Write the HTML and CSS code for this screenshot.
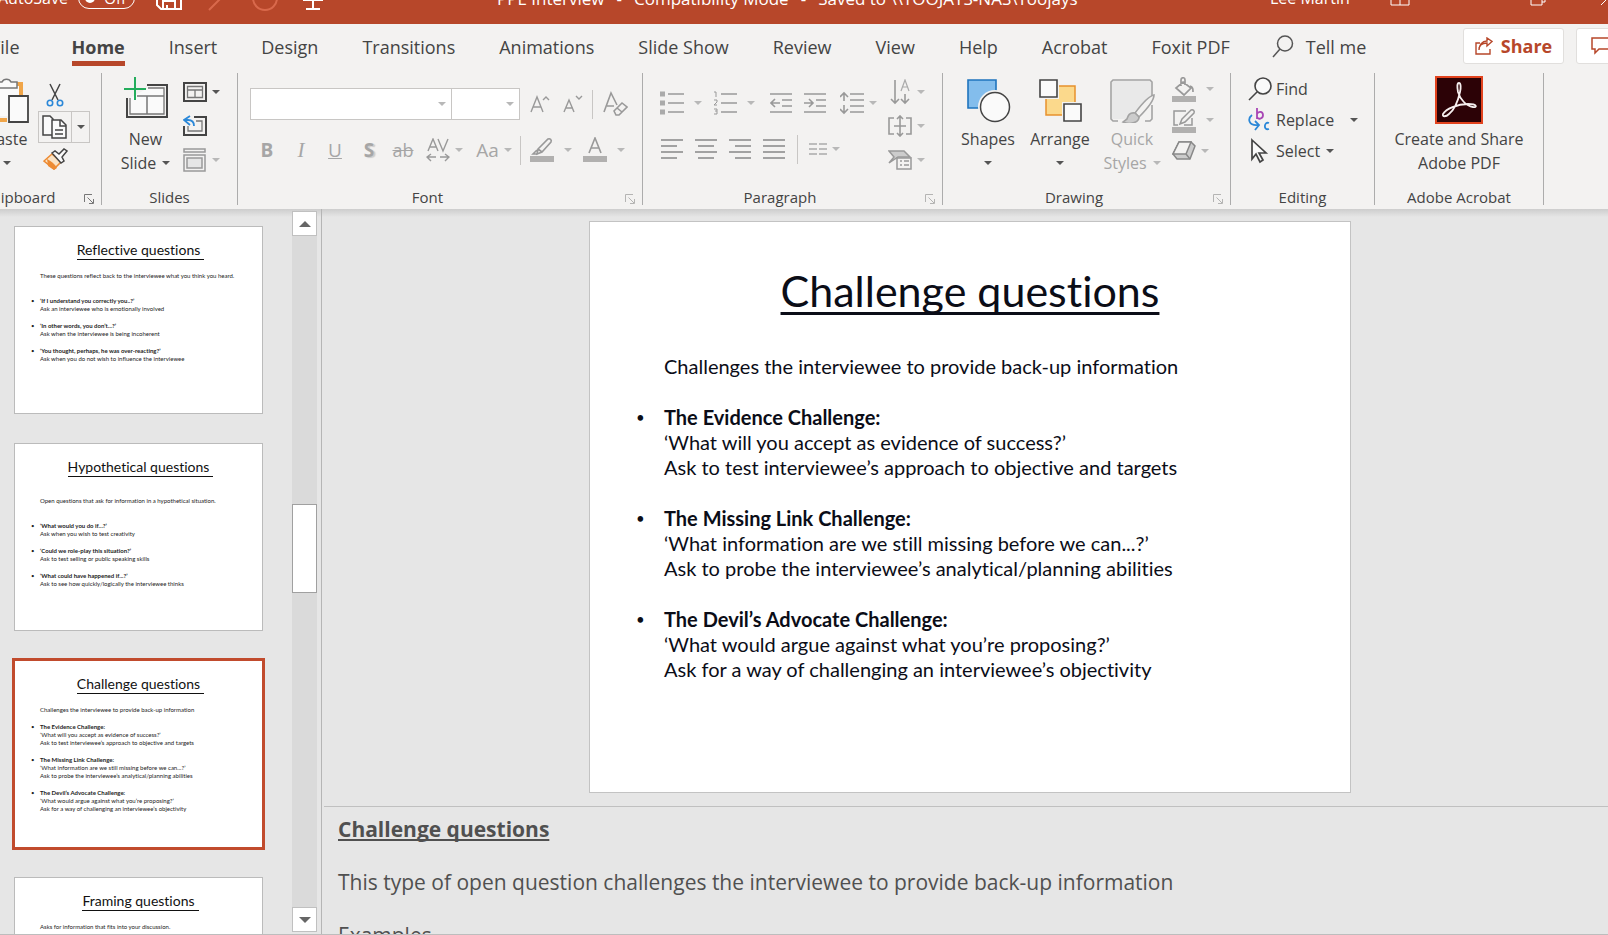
FILE: index.html
```html
<!DOCTYPE html>
<html lang="en">

<head>
    <meta charset="utf-8">
    <title>PPE Interview - PowerPoint</title>
    <link rel="stylesheet" href="styles.css">
</head>

<body>
    <header class="titlebar">
        <div class="titlebar-row">
            <div class="quick-access">
                <span class="autosave">AutoSave</span>
                <button class="toggle" aria-label="AutoSave off"><span class="knob"></span>Off</button>
                <svg class="qa-icon" width="26" height="28" viewBox="0 0 26 28" fill="none" stroke="#fff" stroke-width="2"><path d="M1 3h24v22H5l-4-4zM7 25v-8h12v8M11 25v-4"/></svg>
                <svg class="qa-icon" width="26" height="28" viewBox="0 0 26 28" fill="none" stroke="#d9694c" stroke-width="2"><path d="M5 26L19 12a7 7 0 0 0-10-10"/></svg>
                <svg class="qa-icon" width="26" height="28" viewBox="0 0 26 28" fill="none" stroke="#d9694c" stroke-width="2"><circle cx="13" cy="14" r="12"/></svg>
                <svg class="qa-icon" width="26" height="28" viewBox="0 0 26 28" fill="none" stroke="#fff" stroke-width="2"><path d="M2 2h22M4 2v14h18V2M13 16v9M6 25h14"/></svg>
                <span class="caret caret-light"></span>
            </div>
            <div class="doc-title">
                <span>PPE Interview</span><span>-</span><span>Compatibility Mode</span><span>-</span><span>Saved to \\TOOJAYS-NAS\Toojays</span>
            </div>
            <div class="window-tools">
                <span>Lee Martin</span>
                <svg width="20" height="16" viewBox="0 0 20 16" fill="none" stroke="#fff"><path d="M1 1h18v14H1zM1 5h18M10 9v6"/></svg>
                <svg width="16" height="16" viewBox="0 0 16 16" fill="none" stroke="#fff"><path d="M1 4h11v11H1zM4 4V1h11v11h-3"/></svg>
                <svg width="16" height="16" viewBox="0 0 16 16" fill="none" stroke="#fff"><path d="M1 15L15 1M1 1l14 14"/></svg>
            </div>
        </div>
    </header>

    <nav class="tabs">
        <a href="#" class="tab-file">File</a>
        <a href="#" class="active"><span>Home</span></a>
        <a href="#">Insert</a>
        <a href="#">Design</a>
        <a href="#">Transitions</a>
        <a href="#">Animations</a>
        <a href="#">Slide Show</a>
        <a href="#">Review</a>
        <a href="#">View</a>
        <a href="#">Help</a>
        <a href="#">Acrobat</a>
        <a href="#">Foxit PDF</a>
        <button class="tell-me">
            <svg width="22" height="24" viewBox="0 0 22 24" fill="none" stroke="#555" stroke-width="1.5"><circle cx="13" cy="8.500" r="7.500"/><path d="M8 14L1 22"/></svg>
            Tell me
        </button>
        <div class="tab-actions">
            <button class="share">
                <svg width="18" height="18" viewBox="0 0 18 18" fill="none" stroke="#b7472a" stroke-width="1.400"><path d="M5 6H1v11h14v-5M4 13c0-5 3-7 8-7V9l5-4.500L12 1v3C7 4 4 8 4 13z"/></svg>
                Share
            </button>
            <button class="comments" aria-label="Comments">
                <svg width="20" height="18" viewBox="0 0 20 18" fill="none" stroke="#b7472a" stroke-width="1.500"><path d="M1 1h18v11H8l-4 4v-4H1z"/></svg>
            </button>
        </div>
    </nav>

    <section class="ribbon">
        <div class="group clipboard">
            <div class="group-body">
                <button class="big paste">
                    <svg width="46" height="46" viewBox="0 0 46 46" fill="none"><path d="M9 7H3v36h20M31 7h6v12" stroke="#f0a548" stroke-width="4"/><path d="M5 9h30v30H5z" fill="#fafafa"/><path d="M12 11V5h6a5 5 0 0 1 9 0h6v6z" fill="#fafafa" stroke="#777" stroke-width="1.500"/><path d="M25 19h19v26H25z" fill="#fafafa" stroke="#444" stroke-width="1.800"/></svg>
                    <span>Paste</span>
                    <span class="second"><span class="caret"></span></span>
                </button>
                <div class="stack">
                    <button class="tool" aria-label="Cut">
                        <svg width="18" height="24" viewBox="0 0 18 24" fill="none"><path d="M4 1l8 16M14 1L6 17" stroke="#444" stroke-width="1.500"/><circle cx="4" cy="20" r="2.700" stroke="#2b88d8" stroke-width="1.600"/><circle cx="14" cy="20" r="2.700" stroke="#2b88d8" stroke-width="1.600"/></svg>
                    </button>
                    <div class="copy-split">
                        <button aria-label="Copy">
                            <svg width="26" height="26" viewBox="0 0 26 26" fill="#fafafa" stroke="#444" stroke-width="1.500"><path d="M9 21H1V2h7l3 3v16z"/><path d="M10 6h9l5 5v13H10z"/><path d="M18 6v6h6M13 16h8M13 20h8" fill="none"/></svg>
                        </button>
                        <button aria-label="Copy options"><span class="caret"></span></button>
                    </div>
                    <button class="tool" aria-label="Format Painter">
                        <svg width="25" height="24" viewBox="0 0 25 24" fill="none"><path d="M9 7l9 8-7 7-10-8z" fill="#fbe3c4" stroke="#ed8b33" stroke-width="1.500"/><path d="M4 12c4 2 8 5 10 9l-3 2-6-4z" fill="#ed8b33"/><path d="M9 6l3-2 4 3 5-5 3 2-5 6 2 4-3 2z" fill="#fafafa" stroke="#444" stroke-width="1.500"/></svg>
                    </button>
                </div>
            </div>
            <div class="group-label"><span>Clipboard</span><button class="launcher" aria-label="Clipboard settings"><svg width="10" height="10" viewBox="0 0 10 10" fill="none" stroke="#777"><path d="M.5 8V.5H8M3.500 3.500L9 9M9.500 5v4.500H5"/></svg></button></div>
        </div>

        <div class="group slides">
            <div class="group-body">
                <button class="big new-slide">
                    <svg width="46" height="46" viewBox="0 0 46 46" fill="none"><path d="M24 8h20v32H4V21" stroke="#444" stroke-width="2"/><path d="M25 11h16v26H7V21" fill="#fafafa" stroke="#777" stroke-width="1.300"/><path d="M14 19h27M24 19v18" stroke="#777" stroke-width="1.500"/><path d="M12 0v23M1 12h22" stroke="#23ad5c" stroke-width="2"/></svg>
                    <span>New</span>
                    <span class="second">Slide <span class="caret"></span></span>
                </button>
                <div class="stack side-tools">
                    <button aria-label="Layout"><svg width="24" height="20" viewBox="0 0 24 20" fill="none"><path d="M1 1h22v18H1z" stroke="#444" stroke-width="2"/><path d="M4.500 4.500h15v11h-15zM4.500 8h15M12 8v8" stroke="#777" stroke-width="1.300"/></svg><span class="caret"></span></button>
                    <button aria-label="Reset"><svg width="24" height="22" viewBox="0 0 24 22" fill="none"><path d="M11 2h12v18H1v-9" stroke="#444" stroke-width="2"/><path d="M13 6h6v10H5v-5" stroke="#777" stroke-width="1.300"/><path d="M7 1L1 5l6 5M1 5h4c4 0 6 2 6 6" stroke="#2b88d8" stroke-width="1.800"/></svg></button>
                    <button disabled aria-label="Section"><svg width="24" height="24" viewBox="0 0 24 24" fill="none" stroke="#999" stroke-width="1.500"><path d="M1 1h21v3H1zM1 7h21v16H1z"/><path d="M4 10h15v10H4z" fill="#e6e6e6"/></svg><span class="caret"></span></button>
                </div>
            </div>
            <div class="group-label"><span>Slides</span></div>
        </div>

        <div class="group font">
            <div class="group-body rows">
                <div class="row font-top">
                    <div class="combo"><input type="text" aria-label="Font name"><span class="caret"></span></div>
                    <div class="combo"><input type="text" aria-label="Font size"><span class="caret"></span></div>
                    <button disabled aria-label="Increase font size"><svg width="20" height="20" viewBox="0 0 20 20" fill="none" stroke="#999" stroke-width="1.400"><path d="M1 18L7 3l6 15M3 13h8M13 6l3-3 3 3"/></svg></button>
                    <button disabled aria-label="Decrease font size"><svg width="20" height="20" viewBox="0 0 20 20" fill="none" stroke="#999" stroke-width="1.400"><path d="M1 18L6 6l5 12M3 14h7M13 2l3 3 3-3"/></svg></button>
                    <i class="sep"></i>
                    <button disabled aria-label="Clear formatting"><svg width="25" height="26" viewBox="0 0 25 26" fill="none" stroke="#999" stroke-width="1.600"><path d="M1 21L8 2l6 12M4 15h7"/><path d="M11 20l8-8 5 4-8 8h-3zM14 17l5 4"/></svg></button>
                </div>
                <div class="row font-bottom">
                    <button disabled class="letter"><b>B</b></button>
                    <button disabled class="letter"><i class="serif">I</i></button>
                    <button disabled class="letter"><u>U</u></button>
                    <button disabled class="letter shadow"><b>S</b></button>
                    <button disabled class="letter strike"><s>ab</s></button>
                    <button disabled class="letter" aria-label="Character spacing"><svg width="24" height="24" viewBox="0 0 24 24" fill="none" stroke="#999" stroke-width="1.400"><path d="M2 13L7 1l5 12M4 9h6M12 1l5 12L22 1M1 19h9M14 19h9M5 16l-4 3 4 4M19 16l4 3-4 4"/></svg><span class="caret"></span></button>
                    <button disabled class="letter case">Aa<span class="caret"></span></button>
                    <i class="sep"></i>
                    <button disabled aria-label="Highlight"><svg width="24" height="26" viewBox="0 0 24 26" fill="none" stroke="#999" stroke-width="1.600"><path d="M8 12L18 2c2-1 4 1 3 3L12 15l-5 2zM8 12l4 3M7 13l-4 4h5"/><path d="M0 19h24v6H0z" fill="#b1b0af" stroke="none"/></svg><span class="caret wide"></span></button>
                    <button disabled aria-label="Font colour"><svg width="24" height="26" viewBox="0 0 24 26" fill="none" stroke="#999" stroke-width="1.600"><path d="M6 16l6-15 6 15M8 11h8"/><path d="M0 19h24v6H0z" fill="#b1b0af" stroke="none"/></svg><span class="caret wide"></span></button>
                </div>
            </div>
            <div class="group-label"><span>Font</span><button class="launcher off" aria-label="Font settings"><svg width="10" height="10" viewBox="0 0 10 10" fill="none" stroke="#777"><path d="M.5 8V.5H8M3.500 3.500L9 9M9.500 5v4.500H5"/></svg></button></div>
        </div>

        <div class="group paragraph">
            <div class="group-body">
                <div class="rows">
                    <div class="row para-top">
                        <button disabled aria-label="Bullets"><svg width="24" height="24" viewBox="0 0 24 24" stroke="#999" stroke-width="1.600"><path d="M8 3h16M8 12h16M8 21h16"/><path d="M0 3h5M0 12h5M0 21h5" stroke="#aaa" stroke-width="5"/></svg><span class="caret wide"></span></button>
                        <button disabled aria-label="Numbering"><svg width="24" height="24" viewBox="0 0 24 24" fill="none" stroke="#999" stroke-width="1.600"><path d="M8 3h16M8 12h16M8 21h16"/><path d="M1 1h2v5M1 9h3v2l-3 3h3M1 18h3v5H1M2 20h2" stroke-width="1"/></svg><span class="caret wide"></span></button>
                        <button disabled aria-label="Decrease indent"><svg width="22" height="24" viewBox="0 0 22 24" fill="none" stroke="#999" stroke-width="1.600"><path d="M0 3h22M12 9h10M12 15h10M0 21h22M10 12H1M5 8l-4 4 4 4"/></svg></button>
                        <button disabled aria-label="Increase indent"><svg width="22" height="24" viewBox="0 0 22 24" fill="none" stroke="#999" stroke-width="1.600"><path d="M0 3h22M12 9h10M12 15h10M0 21h22M0 12h9M5 8l4 4-4 4"/></svg></button>
                        <button disabled aria-label="Line spacing"><svg width="24" height="24" viewBox="0 0 24 24" fill="none" stroke="#999" stroke-width="1.600"><path d="M10 3h14M10 9h14M10 15h14M10 21h14M4 2v8M4 14v8M0 6l4-4 4 4M0 18l4 4 4-4"/></svg><span class="caret"></span></button>
                    </div>
                    <div class="row para-bottom">
                        <button disabled aria-label="Align left"><svg width="22" height="20" viewBox="0 0 22 20" stroke="#888" stroke-width="1.600"><path d="M0 1h22M0 7h16M0 13h22M0 19h16"/></svg></button>
                        <button disabled aria-label="Centre"><svg width="22" height="20" viewBox="0 0 22 20" stroke="#888" stroke-width="1.600"><path d="M0 1h22M3 7h16M0 13h22M3 19h16"/></svg></button>
                        <button disabled aria-label="Align right"><svg width="22" height="20" viewBox="0 0 22 20" stroke="#888" stroke-width="1.600"><path d="M0 1h22M6 7h16M0 13h22M6 19h16"/></svg></button>
                        <button disabled aria-label="Justify"><svg width="22" height="20" viewBox="0 0 22 20" stroke="#888" stroke-width="1.600"><path d="M0 1h22M0 7h22M0 13h22M0 19h22"/></svg></button>
                        <i class="sep"></i>
                        <button disabled aria-label="Columns"><svg width="18" height="12" viewBox="0 0 18 12" stroke="#aaa" stroke-width="1.500"><path d="M0 1h8M0 6h8M0 11h8M10 1h8M10 6h8M10 11h8"/></svg><span class="caret"></span></button>
                    </div>
                </div>
                <div class="stack side-tools">
                    <button disabled aria-label="Text direction"><svg width="24" height="26" viewBox="0 0 24 26" fill="none" stroke="#999" stroke-width="1.600"><path d="M7 1v23M3 20l4 4 4-4M17 15v9M13 20l4 4 4-4"/><path d="M13 12l4-11 4 11M14 8h6" stroke="#aaa" stroke-width="1.200"/></svg><span class="caret"></span></button>
                    <button disabled aria-label="Align text"><svg width="24" height="22" viewBox="0 0 24 22" fill="none" stroke="#999" stroke-width="1.600"><path d="M6 3H1v16h5M18 3h5v16h-5M12 1v20M9 4l3-3 3 3M9 18l3 3 3-3M6 11h12"/></svg><span class="caret"></span></button>
                    <button disabled aria-label="Convert to SmartArt"><svg width="24" height="20" viewBox="0 0 24 20" fill="none" stroke="#999" stroke-width="1.500"><path d="M1 1h15l6 6H10l-9 6 5-6z" fill="#ccc"/><path d="M9 8h14v11H9z" fill="#f3f2f1"/><path d="M12 11h2M16 11h5M12 15h2M16 15h5"/></svg><span class="caret"></span></button>
                </div>
            </div>
            <div class="group-label"><span>Paragraph</span><button class="launcher off" aria-label="Paragraph settings"><svg width="10" height="10" viewBox="0 0 10 10" fill="none" stroke="#777"><path d="M.5 8V.5H8M3.500 3.500L9 9M9.500 5v4.500H5"/></svg></button></div>
        </div>

        <div class="group drawing">
            <div class="group-body">
                <button class="big">
                    <svg width="46" height="46" viewBox="0 0 46 46"><path d="M3 3h28v28H3z" fill="#83bdec" stroke="#1f74bd" stroke-width="1.600"/><circle cx="30" cy="30" r="17" fill="#f3f2f1"/><circle cx="30" cy="30" r="14.500" fill="#fafafa" stroke="#444" stroke-width="1.500"/></svg>
                    <span>Shapes</span>
                    <span class="second"><span class="caret"></span></span>
                </button>
                <button class="big">
                    <svg width="46" height="46" viewBox="0 0 46 46"><path d="M9 9h29v29H9z" fill="#fbd98c" stroke="#e8912d" stroke-width="1.500"/><path d="M2 2h20v20H2zM25 25h20v20H25z" fill="#f3f2f1"/><path d="M3 3h17v17H3zM27 27h17v17H27z" fill="#fafafa" stroke="#444" stroke-width="1.600"/></svg>
                    <span>Arrange</span>
                    <span class="second"><span class="caret"></span></span>
                </button>
                <button class="big" disabled>
                    <svg width="46" height="46" viewBox="0 0 46 46" fill="none" stroke="#a3a3a3" stroke-width="1.600"><path d="M3 4h39v14L24 36l-7 6H3z" fill="#e9e9e9" stroke="none"/><path d="M9 44H4l-2-2V5l2-2h37l2 2v14M43 28v14l-2 2h-5" /><path d="M45 18c-5 1-13 10-19 18l4 4c7-7 15-16 15-22z" fill="#f3f2f1"/><path d="M26 36c-6-1-7 3-8 6l-4 3c6 3 16 1 16-5z" fill="#ccc"/></svg>
                    <span>Quick</span>
                    <span class="second">Styles <span class="caret"></span></span>
                </button>
                <div class="stack side-tools">
                    <button disabled aria-label="Shape fill"><svg width="24" height="25" viewBox="0 0 24 25" fill="none" stroke="#999" stroke-width="1.700"><path d="M11 5l8 6-7 7-8-7zM9 9V3c0-3 4-3 4 0v5M18 9c3 1 3 3 3 6"/><path d="M0 19h24v6H0z" fill="#b1b0af" stroke="none"/></svg><span class="caret wide"></span></button>
                    <button disabled aria-label="Shape outline"><svg width="24" height="25" viewBox="0 0 24 25" fill="none" stroke="#999" stroke-width="1.500"><path d="M14 3H2v14h4M20 10v7h-8"/><path d="M10 11l9-9c2-1 4 1 3 3l-9 9-5 2z"/><path d="M0 19h24v6H0z" fill="#b1b0af" stroke="none"/></svg><span class="caret wide"></span></button>
                    <button disabled aria-label="Shape effects"><svg width="24" height="20" viewBox="0 0 24 20" stroke="#888" stroke-width="1.500"><path d="M7 1h12l4 4-5 13H5l-4-5z" fill="#ccc"/><path d="M7 1h12l-5 12H1zM14 13l4 5" fill="#f3f2f1"/></svg><span class="caret"></span></button>
                </div>
            </div>
            <div class="group-label"><span>Drawing</span><button class="launcher off" aria-label="Drawing settings"><svg width="10" height="10" viewBox="0 0 10 10" fill="none" stroke="#777"><path d="M.5 8V.5H8M3.500 3.500L9 9M9.500 5v4.500H5"/></svg></button></div>
        </div>

        <div class="group editing">
            <div class="group-body">
                <button><svg width="24" height="24" viewBox="0 0 24 24" fill="none" stroke="#444" stroke-width="1.600"><circle cx="15" cy="9" r="8" fill="#fafafa"/><path d="M9 15l-8 8"/></svg>Find</button>
                <button><svg width="24" height="26" viewBox="0 0 24 26" fill="none" stroke-width="1.800"><path d="M9 1v11M9 7c1-3 6-3 6 1s-5 5-6 2" stroke="#a846b5"/><path d="M4 8c-5 4-3 11 6 10M7 14l4 4-4 5" stroke="#2b88d8"/><path d="M21 16c-5-2-6 8 0 6" stroke="#2b88d8"/></svg>Replace<span class="caret wide"></span></button>
                <button><svg width="24" height="26" viewBox="0 0 24 26" fill="#fafafa" stroke="#444" stroke-width="1.700"><path d="M4 2l14 13h-7l4 7-3 2-4-8-4 5z"/></svg>Select<span class="caret"></span></button>
            </div>
            <div class="group-label"><span>Editing</span></div>
        </div>

        <div class="group acrobat">
            <div class="group-body">
                <button class="big">
                    <svg width="48" height="48" viewBox="0 0 48 48"><path d="M1 1h46v46H1z" fill="#2c0206" stroke="#e2431e" stroke-width="2"/><path d="M8 38c3-5 14-10 25-10 10 0 9 4 5 3-7-1-13-8-15-15-1-5-1-9 1-9s2 5 1 9c-2 9-6 18-11 22-3 3-7 3-6 0z" fill="none" stroke="#f5eeee" stroke-width="1.800"/></svg>
                    <span>Create and Share</span>
                    <span class="second">Adobe PDF</span>
                </button>
            </div>
            <div class="group-label"><span>Adobe Acrobat</span></div>
        </div>
    </section>

    <main class="workspace">
        <aside class="thumbs">
            <div class="thumb-list">
                <article class="thumb">
                    <h3>Reflective questions</h3>
                    <p class="intro spaced">These questions reflect back to the interviewee what you think you heard.</p>
                    <ul>
                        <li><b>‘If I understand you correctly you..?’</b><br>Ask an interviewee who is emotionally involved</li>
                        <li><b>‘In other words, you don’t...?’</b><br>Ask when the interviewee is being incoherent</li>
                        <li><b>‘You thought, perhaps, he was over-reacting?’</b><br>Ask when you do not wish to influence the interviewee</li>
                    </ul>
                </article>
                <article class="thumb">
                    <h3>Hypothetical questions</h3>
                    <p class="intro lower spaced">Open questions that ask for information in a hypothetical situation.</p>
                    <ul>
                        <li><b>‘What would you do if...?’</b><br>Ask when you wish to test creativity</li>
                        <li><b>‘Could we role-play this situation?’</b><br>Ask to test selling or public speaking skills</li>
                        <li><b>‘What could have happened if...?’</b><br>Ask to see how quickly/logically the interviewee thinks</li>
                    </ul>
                </article>
                <article class="thumb selected">
                    <h3>Challenge questions</h3>
                    <p class="intro">Challenges the interviewee to provide back-up information</p>
                    <ul>
                        <li><b>The Evidence Challenge:</b><br>‘What will you accept as evidence of success?’<br>Ask to test interviewee’s approach to objective and targets</li>
                        <li><b>The Missing Link Challenge:</b><br>‘What information are we still missing before we can...?’<br>Ask to probe the interviewee’s analytical/planning abilities</li>
                        <li><b>The Devil’s Advocate Challenge:</b><br>‘What would argue against what you’re proposing?’<br>Ask for a way of challenging an interviewee’s objectivity</li>
                    </ul>
                </article>
                <article class="thumb">
                    <h3>Framing questions</h3>
                    <p class="intro">Asks for information that fits into your discussion.</p>
                </article>
            </div>
            <div class="scrollbar">
                <button class="up" aria-label="Scroll up"></button>
                <div class="track"><div class="handle"></div></div>
                <button class="down" aria-label="Scroll down"></button>
            </div>
        </aside>

        <div class="editor">
            <div class="stage">
                <article class="slide">
                    <h1>Challenge questions</h1>
                    <p>Challenges the interviewee to provide back-up information</p>
                    <ul>
                        <li><b>The Evidence Challenge:</b><br>‘What will you accept as evidence of success?’<br>Ask to test interviewee’s approach to objective and targets</li>
                        <li><b>The Missing Link Challenge:</b><br>‘What information are we still missing before we can...?’<br>Ask to probe the interviewee’s analytical/planning abilities</li>
                        <li><b>The Devil’s Advocate Challenge:</b><br>‘What would argue against what you’re proposing?’<br>Ask for a way of challenging an interviewee’s objectivity</li>
                    </ul>
                </article>
            </div>
            <div class="notes">
                <h2>Challenge questions</h2>
                <p>This type of open question challenges the interviewee to provide back-up information</p>
                <p>Examples</p>
            </div>
        </div>
    </main>
</body>

</html>
```
FILE: styles.css
```css
* {
    box-sizing: border-box;
}

body {
    margin: 0;
    height: 100vh;
    display: flex;
    flex-direction: column;
    overflow: hidden;
    background: #e6e6e6;
    color: #444;
    font-family: "Open Sans", "Noto Sans", sans-serif;
    font-size: 16px;
}

button {
    border: none;
    background: none;
    padding: 0;
    color: inherit;
    font: inherit;
    cursor: pointer;
}

button:disabled {
    color: #a6a6a6;
}

svg {
    display: block;
    flex: none;
}

.caret {
    display: inline-block;
    flex: none;
    border: 4px solid transparent;
    border-top-color: #555;
    border-bottom: 0;
}

button:disabled .caret,
.combo .caret {
    border-top-color: #b8b8b8;
}

/* title bar, the top half is scrolled off the window */
.titlebar {
    height: 24px;
    flex: none;
    overflow: hidden;
    background: #b7472a;
    color: #fff;
}

.titlebar-row {
    display: flex;
    align-items: center;
    height: 52px;
    margin-top: -28px;
    white-space: nowrap;
}

.quick-access {
    display: flex;
    align-items: center;
    width: 497px;
    flex: none;
}

.autosave {
    width: 80px;
    flex: none;
    margin-left: -2px;
}

.toggle {
    display: flex;
    flex: none;
    align-items: center;
    justify-content: space-between;
    width: 57px;
    height: 22px;
    margin-right: 21px;
    padding: 0 8px 0 6px;
    border: 1px solid #fff;
    border-radius: 11px;
    font-size: 15px;
}

.knob {
    width: 10px;
    height: 10px;
    border-radius: 50%;
    background: #fff;
}

.qa-icon {
    margin-right: 22px;
}

.caret-light {
    margin-left: 8px;
    border-top-color: #fff;
}

.doc-title {
    display: flex;
    gap: 12px;
    flex: 1;
    font-size: 17px;
}

.window-tools {
    display: flex;
    align-items: center;
    width: 338px;
    flex: none;
}

.window-tools span {
    width: 120px;
    flex: none;
}

.window-tools svg:nth-child(3) {
    margin-left: 120px;
}

.window-tools svg:nth-child(4) {
    margin-left: 54px;
}

/* tabs */
.tabs {
    display: flex;
    height: 49px;
    flex: none;
    background: #f3f2f1;
    font-size: 18px;
    white-space: nowrap;
}

.tabs a {
    padding: 0 22px;
    color: inherit;
    line-height: 46px;
    text-decoration: none;
}

.tabs .tab-file {
    margin-left: -31px;
    padding-right: 30px;
}

.tabs .active {
    font-weight: bold;
}

.tabs .active span {
    display: block;
    height: 42px;
    border-bottom: 5px solid #b7472a;
}

.tell-me {
    display: flex;
    align-items: center;
    gap: 12px;
    height: 46px;
    margin-left: 20px;
}

.tab-actions {
    display: flex;
    gap: 12px;
    margin-left: auto;
    margin-right: -60px;
    padding-top: 4px;
}

.tab-actions button {
    display: flex;
    align-items: center;
    justify-content: center;
    gap: 8px;
    width: 101px;
    height: 36px;
    border: 1px solid #e1dfdd;
    border-radius: 3px;
    background: #fff;
    color: #b7472a;
    font-weight: bold;
}

.tab-actions .comments {
    width: 92px;
    justify-content: flex-start;
    padding-left: 14px;
}

/* ribbon */
.ribbon {
    display: flex;
    height: 136px;
    flex: none;
    background: #f3f2f1;
}

.group {
    display: flex;
    flex-direction: column;
    flex: none;
    height: 132px;
    border-right: 1px solid #acacac;
}

.group-body {
    display: flex;
    flex: none;
    height: 116px;
}

.group-label {
    display: flex;
    align-items: center;
    height: 16px;
    font-size: 15px;
    line-height: 16px;
}

.group-label span {
    flex: 1;
    text-align: center;
}

.launcher {
    width: 25px;
    height: 16px;
    padding: 4px 0 0 8px;
}

.launcher.off {
    opacity: 0.5;
}

.big {
    display: flex;
    flex-direction: column;
    align-items: center;
    padding-top: 4px;
    line-height: 24px;
    white-space: nowrap;
}

.big svg {
    margin-bottom: 4px;
}

.second {
    display: flex;
    align-items: center;
    gap: 6px;
    height: 24px;
}

.stack {
    display: flex;
    flex-direction: column;
}

.side-tools {
    gap: 8px;
    padding-top: 6px;
}

.side-tools button {
    display: flex;
    align-items: center;
    gap: 5px;
    height: 26px;
}

.wide {
    margin-left: 5px;
}

.row {
    display: grid;
    align-items: center;
}

.row button {
    display: flex;
    align-items: center;
    gap: 5px;
}

.sep {
    width: 1px;
    height: 29px;
    background: #c8c6c4;
}

/* the left part of this group runs off the window */
.clipboard {
    width: 135px;
    margin-left: -33px;
}

.paste {
    width: 60px;
    margin-left: 10px;
}

.clipboard .stack {
    width: 52px;
    margin-left: 1px;
    padding-top: 6px;
}

.tool {
    display: flex;
    justify-content: center;
    align-items: center;
    width: 34px;
    height: 32px;
}

.copy-split {
    display: flex;
    height: 32px;
    border: 1px solid #c8c6c4;
}

.copy-split button {
    display: flex;
    align-items: center;
    justify-content: center;
    width: 33px;
}

.copy-split button + button {
    width: 18px;
    border-left: 1px solid #c8c6c4;
}

.slides {
    width: 136px;
}

.new-slide {
    width: 69px;
    margin: 0 3px 0 9px;
}

.font {
    width: 405px;
}

.group-body.rows {
    display: block;
    padding: 14px 0 0 12px;
}

.font-top {
    grid-template-columns: 202px 78px 33px 29px 11px 30px;
    height: 34px;
}

.combo {
    display: flex;
    align-items: center;
    height: 32px;
    padding-right: 5px;
    border: 1px solid #c8c6c4;
    background: #fff;
}

.combo + .combo {
    width: 69px;
    margin-left: -1px;
}

.combo input {
    flex: 1;
    min-width: 0;
    height: 28px;
    border: none;
    outline: none;
    background: none;
}

.font-bottom {
    grid-template-columns: 34px 34px 34px 34px 34px 48px 52px 10px 53px 50px;
    height: 58px;
}

.letter {
    justify-content: center;
    font-size: 19px;
}

.letter .serif {
    font-family: "Liberation Serif", serif;
    font-size: 21px;
}

.shadow b {
    text-shadow: 2px 1px 1px #ccc;
}

.strike {
    font-size: 18px;
}

.paragraph {
    width: 300px;
}

.paragraph .rows {
    width: 245px;
    padding: 13px 0 0 17px;
}

.para-top {
    grid-template-columns: 53px 57px 34px 36px 40px;
    height: 34px;
}

.para-bottom {
    grid-template-columns: 34px 34px 34px 34px 12px 40px;
    height: 58px;
    padding-left: 1px;
}

.drawing {
    width: 288px;
}

.drawing .big {
    width: 72px;
}

.drawing .big:first-child {
    margin-left: 9px;
}

.drawing .side-tools {
    margin-left: 4px;
    padding-top: 3px;
    gap: 5px;
}

.editing {
    width: 144px;
}

.editing .group-body {
    flex-direction: column;
    padding: 0 0 0 17px;
}

.editing .group-body button {
    display: flex;
    align-items: center;
    gap: 4px;
    height: 31px;
}

.editing .caret {
    margin-left: 2px;
}

.editing .caret.wide {
    margin-left: 12px;
}

.acrobat {
    width: 169px;
}

.acrobat .big {
    width: 100%;
    padding-top: 3px;
}

.acrobat .big svg {
    margin-bottom: 3px;
}

/* workspace */
.workspace {
    display: flex;
    flex: 1;
    min-height: 0;
    border-bottom: 1px solid #bdbdbd;
    background: linear-gradient(#cdcdcd, #e6e6e6 8px);
}

.thumbs {
    display: flex;
    justify-content: space-between;
    width: 322px;
    flex: none;
    overflow: hidden;
    border-right: 1px solid #b5b5b5;
}

.thumb-list {
    display: flex;
    flex-direction: column;
    gap: 29px;
    padding: 17px 0 0 14px;
}

.thumb {
    width: 249px;
    height: 188px;
    flex: none;
    padding: 13px 21px 0 25px;
    border: 1px solid #bbb;
    background: #fff;
    color: #222;
    font-family: Lato, sans-serif;
    font-size: 6px;
    font-variant-ligatures: none;
    line-height: 8px;
    white-space: nowrap;
}

.thumb.selected {
    border-color: #c14b2d;
    outline: 2px solid #c14b2d;
}

.thumb h3 {
    width: fit-content;
    height: 20px;
    margin: 0 auto;
    padding-right: 4px;
    border-bottom: 1px solid #111;
    color: #111;
    font-size: 14px;
    font-weight: normal;
    line-height: 20px;
}

.thumb .intro {
    margin: 12px 0 9px;
}

.thumb .spaced {
    margin-bottom: 17px;
}

.thumb .lower {
    margin-top: 20px;
}

.thumb ul,
.slide ul {
    margin: 0;
    padding: 0;
    list-style: none;
}

.thumb li {
    margin-bottom: 9px;
}

.thumb li::before {
    content: "•";
    float: left;
    margin-left: -9px;
}

.scrollbar {
    display: flex;
    flex-direction: column;
    width: 25px;
    margin: 2px 4px 2px 0;
    background: #dadada;
}

.scrollbar button {
    display: flex;
    align-items: center;
    justify-content: center;
    height: 25px;
    border: 1px solid #c0c0c0;
    background: #fff;
}

.scrollbar button::before {
    content: "";
    border: 6px solid transparent;
}

.scrollbar .up::before {
    border-top: 0;
    border-bottom-color: #666;
}

.scrollbar .down::before {
    border-bottom: 0;
    border-top-color: #666;
}

.track {
    display: flex;
    flex-direction: column;
    flex: 1;
}

.track::before {
    content: "";
    flex: 268;
}

.track::after {
    content: "";
    flex: 314;
}

.handle {
    height: 89px;
    border: 1px solid #a0a0a0;
    background: #fff;
}

.editor {
    display: flex;
    flex-direction: column;
    flex: 1;
    min-width: 0;
    padding-left: 2px;
}

.stage {
    flex: 1;
    min-height: 0;
    padding-top: 12px;
    padding-left: 8px;
}

.slide {
    width: 762px;
    height: 572px;
    margin: 0 auto;
    padding: 42px 74px 0;
    border: 1px solid #c3c3c3;
    background: #fff;
    color: #0b0d17;
    font-family: Lato, sans-serif;
    font-size: 20px;
    font-variant-ligatures: none;
    line-height: 25px;
}

.slide h1 {
    width: fit-content;
    margin: 0 auto 36px;
    font-size: 43px;
    font-weight: normal;
    line-height: 54px;
    text-decoration: underline;
    text-decoration-thickness: 3px;
    text-decoration-skip-ink: none;
    text-underline-offset: 5px;
}

.slide p {
    margin: 0 0 26px;
}

.slide li {
    margin-bottom: 26px;
}

.slide li::before {
    content: "•";
    float: left;
    margin-left: -28px;
    font-size: 15px;
}

.notes {
    height: 128px;
    flex: none;
    overflow: hidden;
    padding: 8px 14px 0;
    border-top: 1px solid #c0c0c0;
    color: #505050;
    font-size: 21px;
    line-height: 28px;
}

.notes h2,
.notes p {
    margin: 0 0 25px;
    font-size: 21px;
}

.notes h2 {
    text-decoration: underline;
    text-decoration-skip-ink: none;
}
```
